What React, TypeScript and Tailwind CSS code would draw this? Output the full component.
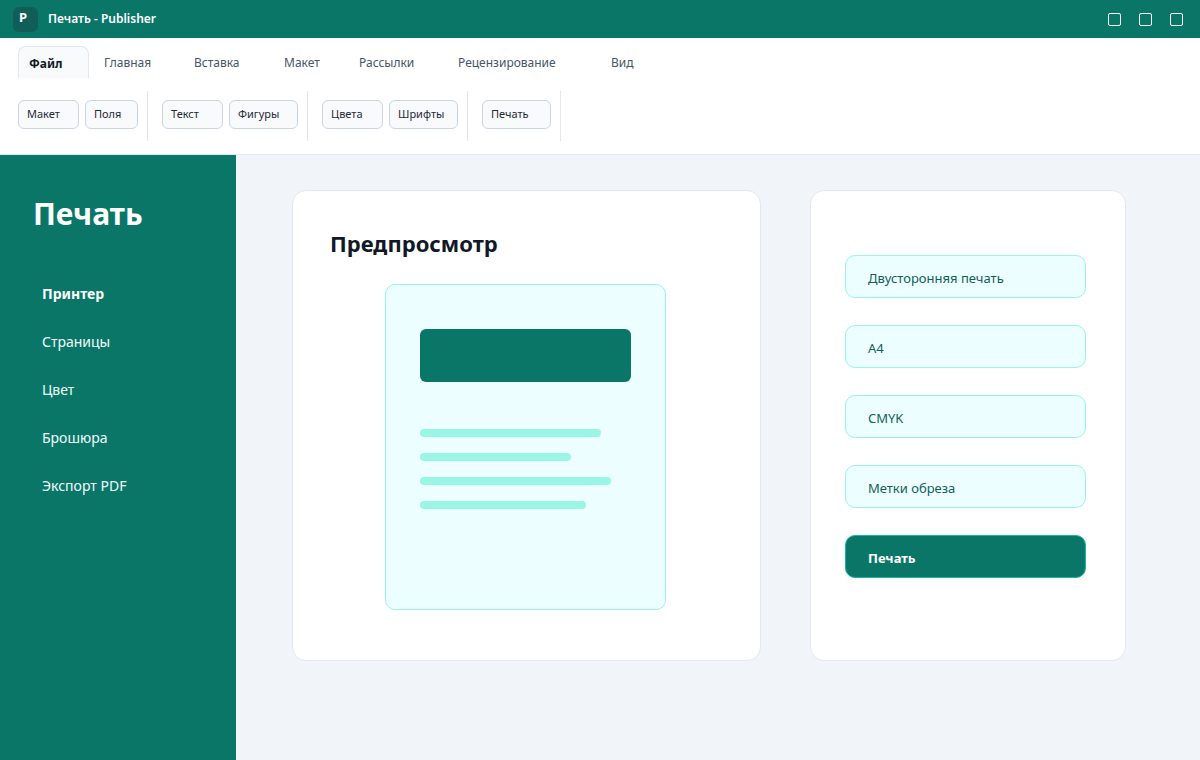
const tabs = [
  { label: "Файл", width: "w-[71px]", active: true },
  { label: "Главная", width: "w-[86px]" },
  { label: "Вставка", width: "w-[86px]" },
  { label: "Макет", width: "w-[71px]" },
  { label: "Рассылки", width: "w-[95px]" },
  { label: "Рецензирование", width: "w-[149px]" },
  { label: "Вид", width: "w-[71px]" },
];

const groups = [
  [
    { label: "Макет", width: "w-[61px]" },
    { label: "Поля", width: "w-[53px]" },
  ],
  [
    { label: "Текст", width: "w-[61px]" },
    { label: "Фигуры", width: "w-[69px]" },
  ],
  [
    { label: "Цвета", width: "w-[61px]" },
    { label: "Шрифты", width: "w-[69px]" },
  ],
  [{ label: "Печать", width: "w-[69px]" }],
];

const navItems = ["Принтер", "Страницы", "Цвет", "Брошюра", "Экспорт PDF"];
const options = ["Двусторонняя печать", "A4", "CMYK", "Метки обреза"];
const lines = ["w-[181px]", "w-[151px]", "w-[191px]", "w-[166px]"];

function TitleBar() {
  return (
    <div className="flex h-[38px] items-center bg-[#0a7668] pl-[13px] pr-[17px] text-white">
      <div className="flex h-[25px] w-[25px] items-center justify-center rounded-[6px] bg-[#115e59] text-[13px] font-bold leading-none pb-[3px] pr-[5px]">
        P
      </div>
      <span className="ml-[10px] text-[12px] font-semibold">Печать - Publisher</span>
      <div className="ml-auto flex gap-[18px]">
        <div className="h-[13px] w-[13px] rounded-[2px] border border-white" />
        <div className="h-[13px] w-[13px] rounded-[2px] border border-white" />
        <div className="h-[13px] w-[13px] rounded-[2px] border border-white" />
      </div>
    </div>
  );
}

function Ribbon() {
  return (
    <div className="h-[117px] border-b border-[#e2e8f0] bg-white pl-[18px]">
      <div className="flex gap-[4px] pt-[8px]">
        {tabs.map((t) => (
          <div
            key={t.label}
            className={
              t.active
                ? `${t.width} h-[32px] rounded-t-[8px] border border-b-0 border-[#e2e8f0] bg-[#f8fafc] pl-[10px] text-[12px] font-bold leading-[33px] text-[#111827]`
                : `${t.width} h-[32px] pl-[11px] text-[12px] leading-[33px] text-[#475569]`
            }
          >
            {t.label}
          </div>
        ))}
      </div>
      <div className="mt-[13px] flex">
        {groups.map((g, i) => (
          <div
            key={i}
            className="mr-[14px] flex h-[50px] gap-[6px] border-r border-[#e2e8f0] pr-[9px] pt-[9px]"
          >
            {g.map((b) => (
              <div
                key={b.label}
                className={`${b.width} h-[29px] rounded-[6px] border border-[#cbd5e1] bg-[#f8fafc] pl-[8px] text-[11px] leading-[26px] text-[#1f2937]`}
              >
                {b.label}
              </div>
            ))}
          </div>
        ))}
      </div>
    </div>
  );
}

function Sidebar() {
  return (
    <div className="w-[236px] shrink-0 bg-[#0a7668] pl-[33px] pt-[37px] text-white">
      <h1 className="text-[30px] font-bold leading-[44px]">Печать</h1>
      <div className="mt-[34px] pl-[9px]">
        {navItems.map((n, i) => (
          <div
            key={n}
            className={`h-[48px] text-[14px] leading-[48px] ${i === 0 ? "font-bold" : "text-[#f0fdfa]"}`}
          >
            {n}
          </div>
        ))}
      </div>
    </div>
  );
}

function Preview() {
  return (
    <div className="h-[471px] w-[469px] rounded-[14px] border border-[#e2e8f0] bg-white pl-[37px] pt-[35px]">
      <h2 className="text-[22px] font-bold leading-[34px] text-[#111827]">Предпросмотр</h2>
      <div className="ml-[55px] mt-[24px] h-[326px] w-[281px] rounded-[10px] border border-[#99f6e4] bg-[#ecfeff] pl-[34px] pt-[44px]">
        <div className="h-[53px] w-[211px] rounded-[6px] bg-[#0a7668]" />
        <div className="mt-[47px] flex flex-col gap-[16px]">
          {lines.map((w) => (
            <div key={w} className={`${w} h-[8px] rounded-full bg-[#99f6e4]`} />
          ))}
        </div>
      </div>
    </div>
  );
}

function Settings() {
  return (
    <div className="ml-[49px] flex h-[471px] w-[316px] flex-col gap-[27px] rounded-[14px] border border-[#e2e8f0] bg-white pl-[34px] pt-[64px]">
      {options.map((o) => (
        <div
          key={o}
          className="h-[43px] w-[241px] rounded-[10px] border border-[#99f6e4] bg-[#ecfeff] pl-[22px] text-[13px] leading-[45px] text-[#115e59]"
        >
          {o}
        </div>
      ))}
      <div className="h-[43px] w-[241px] rounded-[10px] border border-[#14b8a6] bg-[#0a7668] pl-[22px] text-[13px] font-bold leading-[45px] text-white">
        Печать
      </div>
    </div>
  );
}

export default function App() {
  return (
    <div className="flex h-[760px] w-[1200px] flex-col overflow-hidden font-['Noto_Sans',sans-serif]">
      <TitleBar />
      <Ribbon />
      <div className="flex flex-1">
        <Sidebar />
        <div className="flex flex-1 items-start bg-[#f1f5f9] pl-[56px] pt-[35px]">
          <Preview />
          <Settings />
        </div>
      </div>
    </div>
  );
}
